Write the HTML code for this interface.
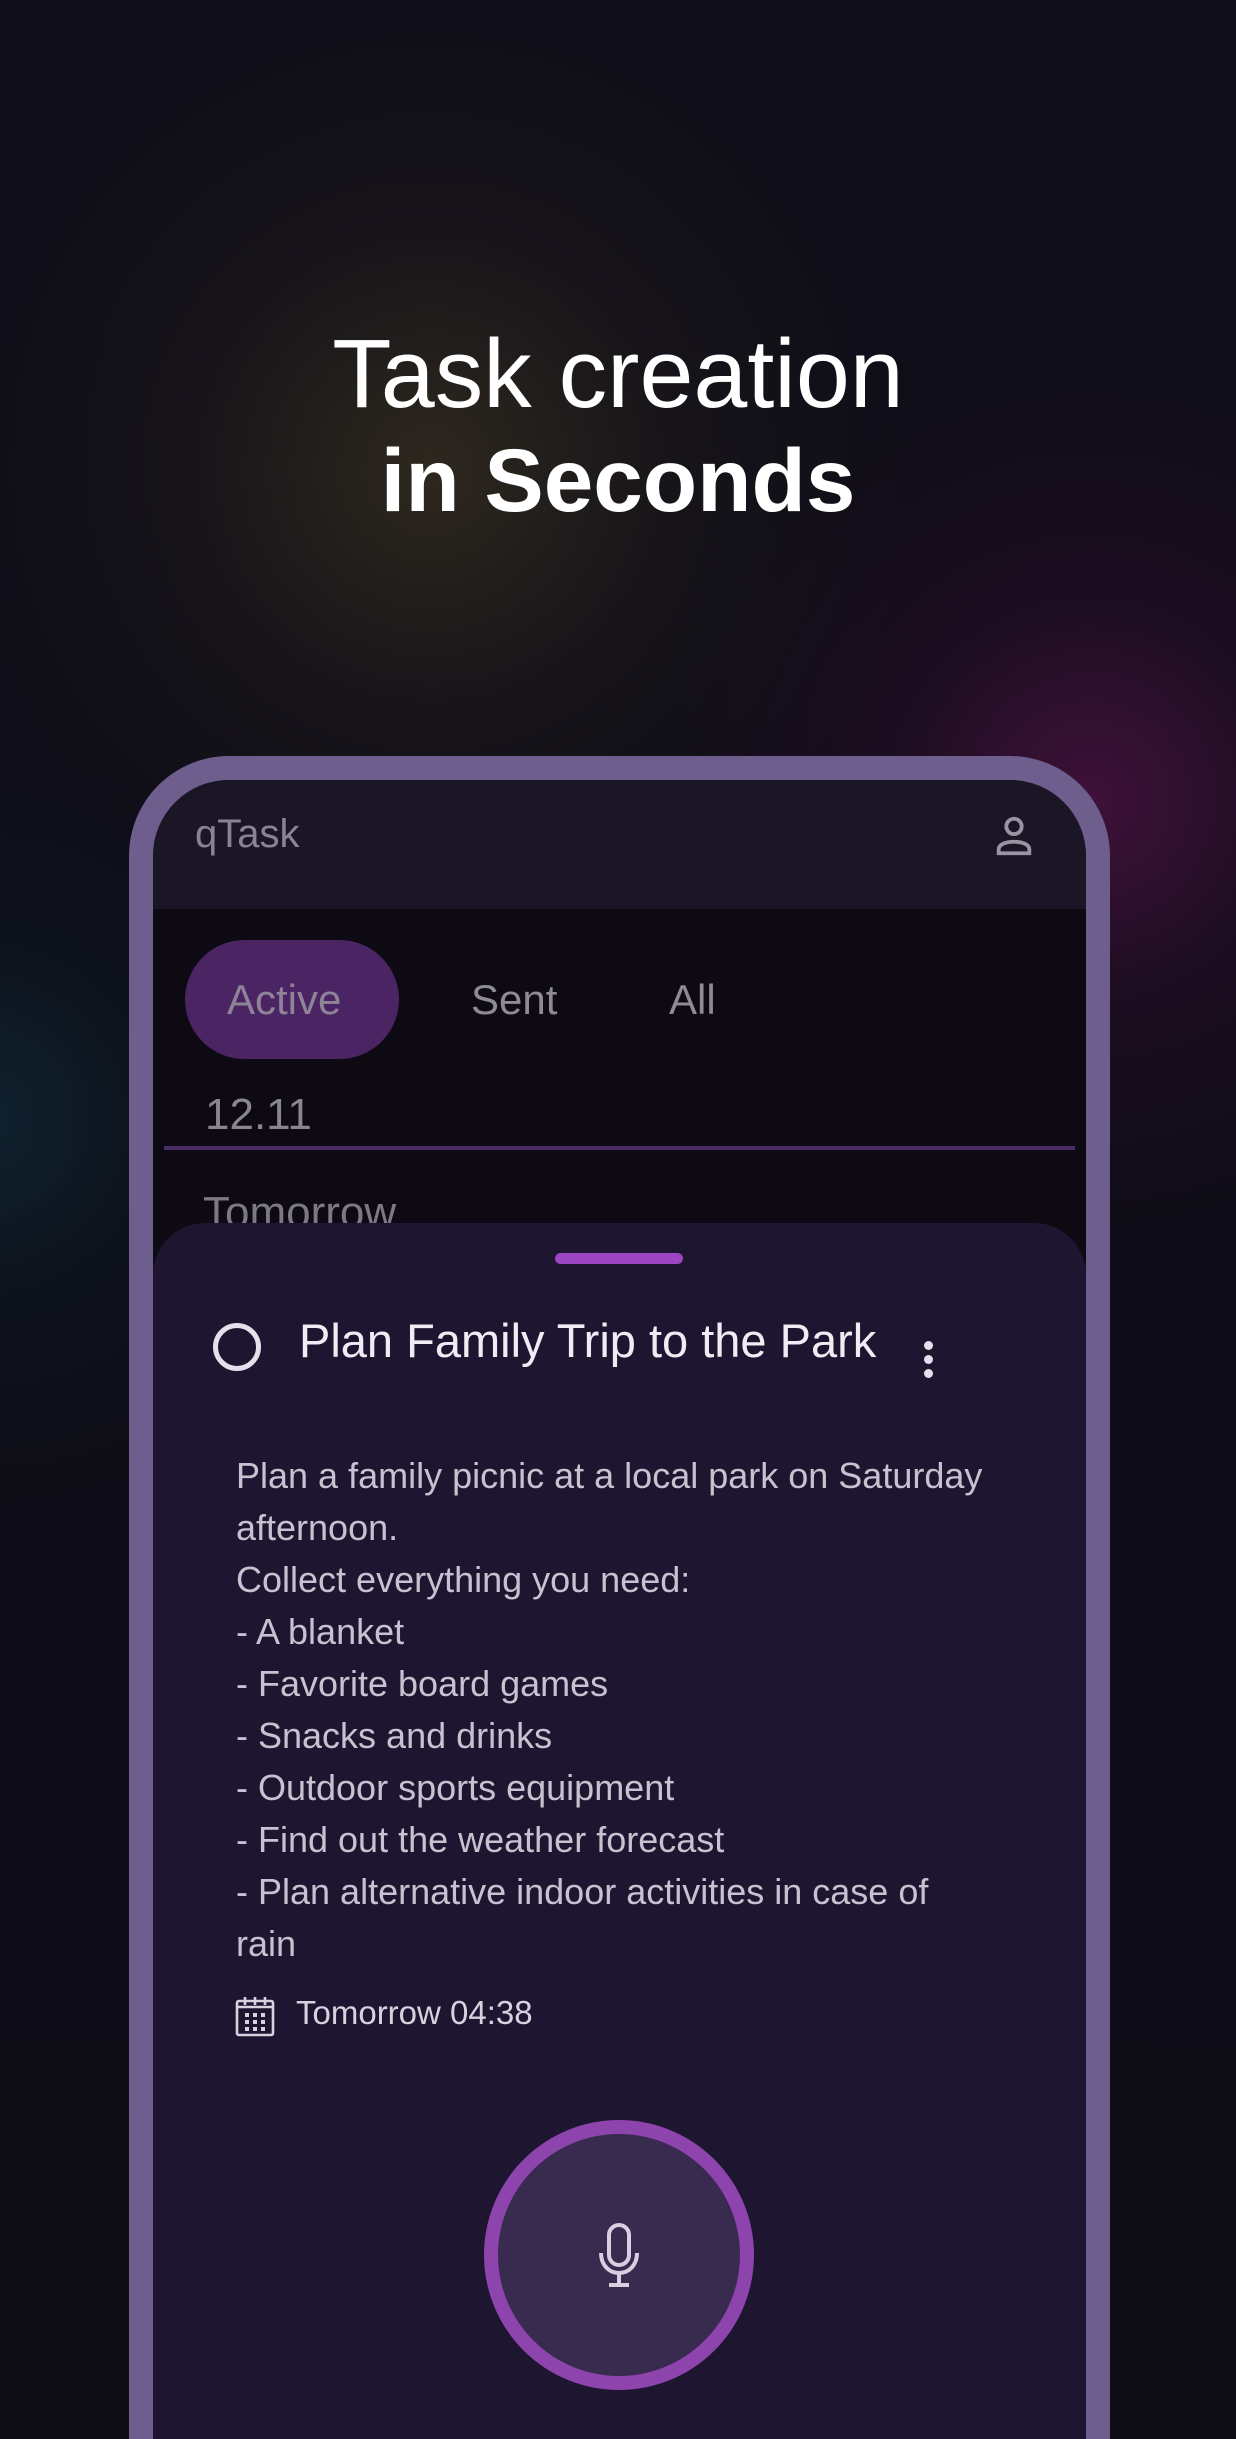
<!DOCTYPE html>
<html><head><meta charset="utf-8"><style>
*{margin:0;padding:0;box-sizing:border-box}
html,body{width:1236px;height:2439px;overflow:hidden}
body{position:relative;background:#0e0c15;font-family:"Liberation Sans",sans-serif}
.bg{position:absolute;inset:0;background:
radial-gradient(circle at 430px 470px,rgba(70,62,35,.55) 0,rgba(40,35,30,.3) 250px,rgba(0,0,0,0) 480px),
radial-gradient(circle at 1090px 800px,rgba(95,20,80,.6) 0,rgba(60,15,55,.3) 200px,rgba(0,0,0,0) 420px),
radial-gradient(circle at -20px 1120px,rgba(15,55,70,.5) 0,rgba(10,35,45,.25) 180px,rgba(0,0,0,0) 380px),
linear-gradient(#0f0d18,#0e0c15)}
.h{position:absolute;left:0;width:1236px;text-align:center;color:#fff;line-height:100px}
.phone{position:absolute;left:129px;top:756px;width:981px;height:1683px;background:#6e5e8e;border-radius:100px 100px 0 0}
.screen{position:absolute;left:153px;top:780px;width:933px;height:1659px;background:#0d0a14;border-radius:76px 76px 0 0;overflow:hidden}
.hdr{position:absolute;left:0;top:0;width:933px;height:129px;background:#1b1626}
.abs{position:absolute}
.sheet{position:absolute;left:0;top:443px;width:933px;height:1216px;background:#1e1530;border-radius:52px 52px 0 0}
.body{position:absolute;left:83px;top:670px;color:#c8c2d0;font-size:36px;line-height:52px;width:755px}
</style></head><body>
<div class="bg"></div>
<div class="h" style="top:324px;font-size:97px">Task creation</div>
<div class="h" style="top:430px;font-size:89px;font-weight:bold">in Seconds</div>
<div class="phone"></div>
<div class="screen">
 <div class="hdr">
  <div class="abs" style="left:42px;top:32px;font-size:40px;color:#8a8296">qTask</div>
  <svg class="abs" style="left:838px;top:33px" width="46" height="46" viewBox="0 0 24 24" fill="none" stroke="#9a93a3" stroke-width="2"><circle cx="12" cy="7" r="4"/><path d="M4 21v-2c0-2.5 3.5-4 8-4s8 1.5 8 4v2z"/></svg>
 </div>
 <div class="abs" style="left:32px;top:160px;width:214px;height:119px;border-radius:60px;background:#4b2463"></div>
 <div class="abs" style="left:74px;top:196px;font-size:42px;color:#8e8498">Active</div>
 <div class="abs" style="left:318px;top:196px;font-size:42px;color:#8e8a96">Sent</div>
 <div class="abs" style="left:516px;top:196px;font-size:42px;color:#8e8a96">All</div>
 <div class="abs" style="left:52px;top:310px;font-size:44px;color:#8a8690">12.11</div>
 <div class="abs" style="left:11px;top:366px;width:911px;height:4px;background:#4a2b63"></div>
 <div class="abs" style="left:50px;top:408px;font-size:44px;color:#7c7884">Tomorrow</div>
 <div class="sheet">
  <div class="abs" style="left:402px;top:30px;width:128px;height:11px;border-radius:6px;background:#9b45c2"></div>
  <div class="abs" style="left:60px;top:100px;width:48px;height:48px;border:5px solid #e6e0ec;border-radius:50%"></div>
  <div class="abs" style="left:146px;top:90px;font-size:47px;color:#f0ecf4">Plan Family Trip to the Park</div>
  <div class="abs" style="left:771px;top:118px;width:9px;height:9px;border-radius:50%;background:#e6e0ec;box-shadow:0 14px 0 #e6e0ec,0 28px 0 #e6e0ec"></div>
 </div>
 <div class="body">Plan a family picnic at a local park on Saturday afternoon.<br>Collect everything you need:<br>- A blanket<br>- Favorite board games<br>- Snacks and drinks<br>- Outdoor sports equipment<br>- Find out the weather forecast<br>- Plan alternative indoor activities in case of rain</div>
 <svg class="abs" style="left:82px;top:1215px" width="40" height="42" viewBox="0 0 20 21" fill="none" stroke="#d8d2de" stroke-width="1.3"><rect x="1" y="3" width="18" height="17" rx="1"/><path d="M5 1v4M10 1v4M15 1v4M1 6h18"/><g fill="#d8d2de" stroke="none"><rect x="5" y="9" width="2" height="2"/><rect x="9" y="9" width="2" height="2"/><rect x="13" y="9" width="2" height="2"/><rect x="5" y="12.5" width="2" height="2"/><rect x="9" y="12.5" width="2" height="2"/><rect x="13" y="12.5" width="2" height="2"/><rect x="5" y="16" width="2" height="2"/><rect x="9" y="16" width="2" height="2"/><rect x="13" y="16" width="2" height="2"/></g></svg>
 <div class="abs" style="left:143px;top:1214px;font-size:33px;color:#d8d2de">Tomorrow 04:38</div>
 <div class="abs" style="left:331px;top:1340px;width:270px;height:270px;border-radius:50%;background:#392a50;border:14px solid #8e44ad"></div>
 <svg class="abs" style="left:444px;top:1443px" width="44" height="66" viewBox="0 0 22 33" fill="none" stroke="#d8d0e0" stroke-width="2"><rect x="6" y="1" width="10" height="20" rx="5"/><path d="M2 15c0 6 4 10 9 10s9-4 9-10M11 25v6M6 31h10"/></svg>
</div>
</body></html>
